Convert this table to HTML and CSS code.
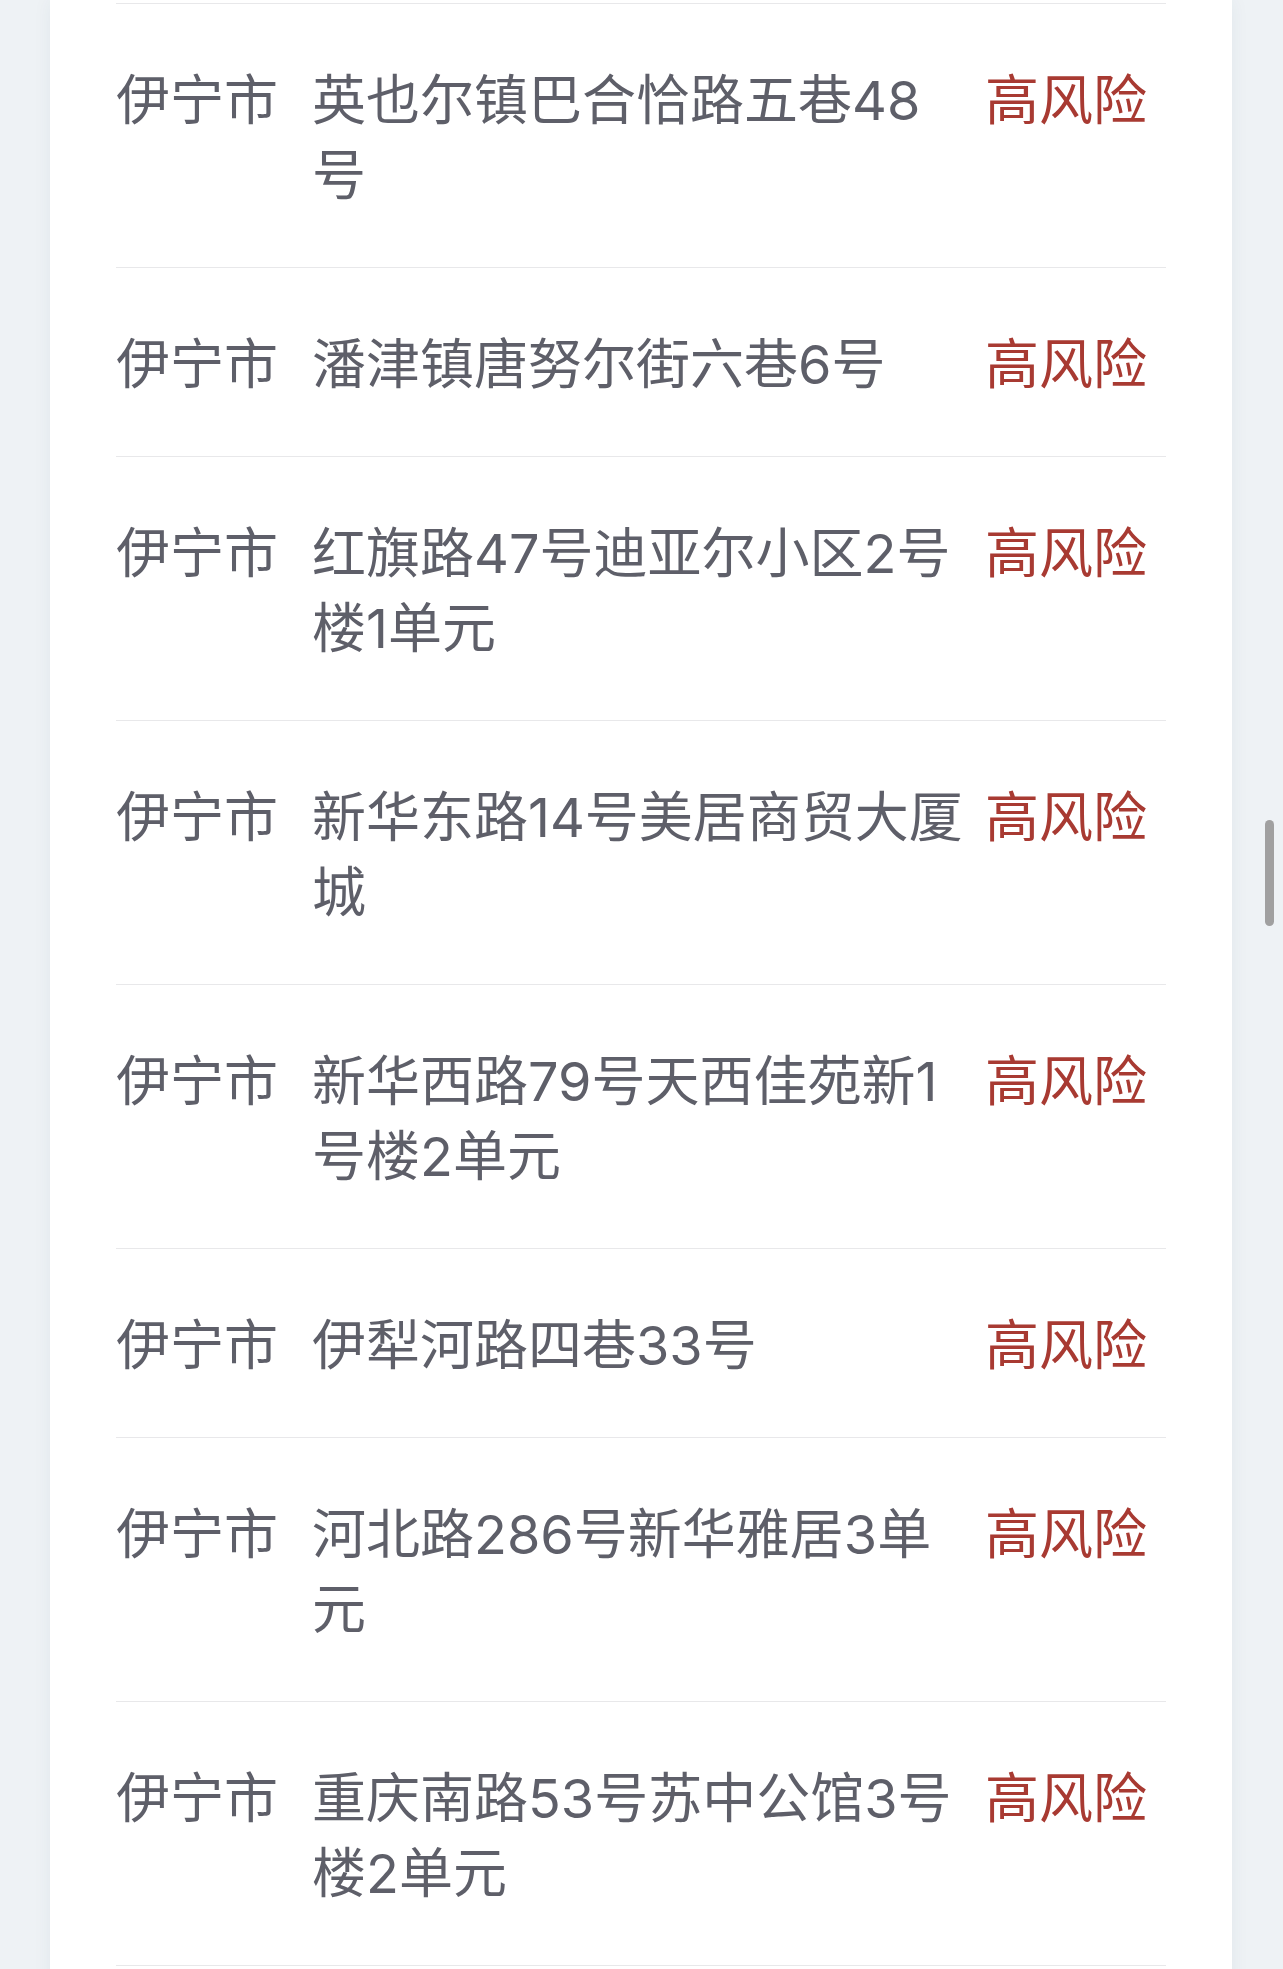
FILE: index.html
```html
<!DOCTYPE html>
<html lang="zh-CN">
<head>
<meta charset="utf-8">
<title>风险地区</title>
<link rel="stylesheet" href="styles.css">
</head>
<body>
<div class="card">
  <div class="list">
    <div class="row"><div class="city">伊宁市</div><div class="addr">英也尔镇巴合恰路五巷48号</div><div class="risk">高风险</div></div>
    <div class="row"><div class="city">伊宁市</div><div class="addr">潘津镇唐努尔街六巷6号</div><div class="risk">高风险</div></div>
    <div class="row"><div class="city">伊宁市</div><div class="addr">红旗路47号迪亚尔小区2号楼1单元</div><div class="risk">高风险</div></div>
    <div class="row"><div class="city">伊宁市</div><div class="addr">新华东路14号美居商贸大厦城</div><div class="risk">高风险</div></div>
    <div class="row"><div class="city">伊宁市</div><div class="addr">新华西路79号天西佳苑新1号楼2单元</div><div class="risk">高风险</div></div>
    <div class="row"><div class="city">伊宁市</div><div class="addr">伊犁河路四巷33号</div><div class="risk">高风险</div></div>
    <div class="row"><div class="city">伊宁市</div><div class="addr">河北路286号新华雅居3单元</div><div class="risk">高风险</div></div>
    <div class="row"><div class="city">伊宁市</div><div class="addr">重庆南路53号苏中公馆3号楼2单元</div><div class="risk">高风险</div></div>
  </div>
</div>
<div class="scrollbar"></div>
</body>
</html>
```

FILE: styles.css
```css
html, body {
  margin: 0;
  padding: 0;
}
body {
  background: #eef2f5;
  font-family: "Inter", "Noto Sans CJK SC", sans-serif;
  height: 1969px;
  overflow: hidden;
}
.card {
  margin-left: 50px;
  width: 1182px;
  box-sizing: border-box;
  padding: 3px 66px 40px;
  background: #ffffff;
  box-shadow: 0 0 18px rgba(30, 60, 100, 0.06);
  min-height: 1969px;
}
.list {
  border-top: 1px solid #e8e8ea;
}
.row {
  display: grid;
  grid-template-columns: 196px 655px 1fr;
  padding: 59px 0 54px;
  border-bottom: 1px solid #e8e8ea;
  font-size: 54px;
  line-height: 75px;
  color: #5e5f69;
}
.risk {
  padding-left: 18px;
  white-space: nowrap;
  color: #a83a32;
}
.scrollbar {
  position: fixed;
  left: 1265px;
  top: 820px;
  width: 9px;
  height: 106px;
  border-radius: 5px;
  background: #a0a0a0;
}
```
